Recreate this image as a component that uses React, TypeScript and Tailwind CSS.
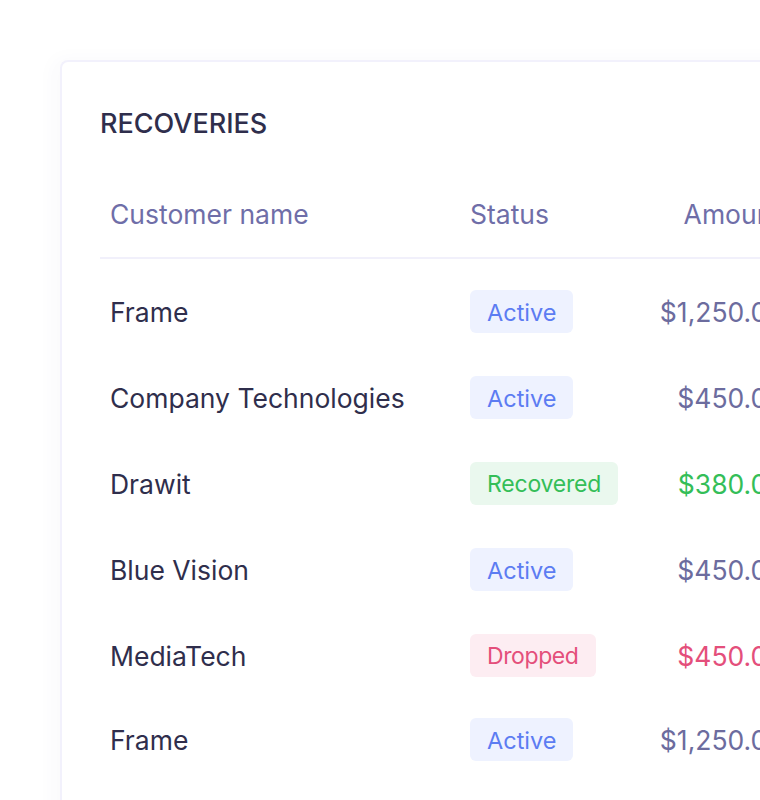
import React from "react";

type Row = { name: string; status: "Active" | "Recovered" | "Dropped"; amount: string };

const rows: Row[] = [
  { name: "Frame", status: "Active", amount: "$1,250.00" },
  { name: "Company Technologies", status: "Active", amount: "$450.00" },
  { name: "Drawit", status: "Recovered", amount: "$380.00" },
  { name: "Blue Vision", status: "Active", amount: "$450.00" },
  { name: "MediaTech", status: "Dropped", amount: "$450.00" },
  { name: "Frame", status: "Active", amount: "$1,250.00" },
];

function Badge({ status }: { status: Row["status"] }) {
  if (status === "Recovered")
    return (
      <span className="inline-flex h-[43px] items-center rounded-[6px] bg-[#eaf8ee] px-[17px] pt-[3px] text-[23px] tracking-[-0.2px] text-[#34be58]">
        Recovered
      </span>
    );
  if (status === "Dropped")
    return (
      <span className="inline-flex h-[43px] items-center rounded-[6px] bg-[#fdedf2] px-[17px] pt-[3px] text-[23px] tracking-[-0.4px] text-[#e44f7b]">
        Dropped
      </span>
    );
  return (
    <span className="inline-flex h-[43px] items-center rounded-[6px] bg-[#eef2ff] px-[17px] pt-[3px] text-[23.5px] text-[#5c7cf2]">
      Active
    </span>
  );
}

function amountColor(s: Row["status"]) {
  if (s === "Recovered") return "text-[#34be58]";
  if (s === "Dropped") return "text-[#e44f7b]";
  return "text-[#6c6c9e]";
}

export default function App() {
  return (
    <div
      className="h-[800px] w-[760px] overflow-hidden bg-white pl-[60px] pt-[60px]"
      style={{ fontFamily: "Inter, 'Noto Sans', sans-serif" }}
    >
      <div className="h-[800px] w-[760px] rounded-tl-[8px] border-l-2 border-t-2 border-[#f2f1fc] bg-white pl-[38px] pt-[38px] shadow-[-6px_0_20px_rgba(60,60,120,0.03)]">
        <div className="flex h-[48px] items-center text-[27px] font-medium text-[#2f2e4c]">RECOVERIES</div>
        <div className="mt-[21px] w-[700px]">
          <div className="grid h-[90px] grid-cols-[370px_130px_184px] items-center border-b-2 border-[#f1f0fb] pt-[4px] text-[26.5px] text-[#6f6ea8]">
            <div className="pl-[10px]">Customer name</div>
            <div>Status</div>
            <div className="whitespace-nowrap pr-[3px] text-right">Amount</div>
          </div>
          <div className="pt-[9px]">
            {rows.map((r, i) => (
              <div
                key={i}
                className="grid h-[86px] grid-cols-[370px_130px_184px] items-center text-[26.5px] last:h-[82px]"
              >
                <div className="whitespace-nowrap pl-[10px] pt-[3px] text-[#2f2e4c]">{r.name}</div>
                <div>
                  <Badge status={r.status} />
                </div>
                <div className={`whitespace-nowrap pt-[3px] text-right ${amountColor(r.status)}`}>{r.amount}</div>
              </div>
            ))}
          </div>
        </div>
      </div>
    </div>
  );
}
